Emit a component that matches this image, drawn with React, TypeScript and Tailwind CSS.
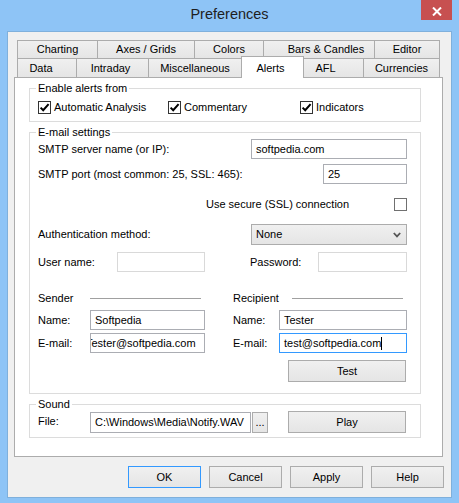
import React from "react";

function Check({ checked }: { checked?: boolean }) {
  return (
    <span className={`w-[13px] h-[13px] border ${checked ? "border-[#333333]" : "border-[#707070]"} bg-white flex items-center justify-center shrink-0`}>
      {checked && (
        <svg width="11" height="11" viewBox="0 0 11 11">
          <path d="M1.6 5.6 L4.2 8.2 L9.6 2.2" fill="none" stroke="#000" strokeWidth="2" />
        </svg>
      )}
    </span>
  );
}

function Btn({ children, className = "" }: { children: React.ReactNode; className?: string }) {
  return (
    <div className={`h-[22px] border bg-linear-to-b from-[#f0f0f0] to-[#e5e5e5] flex items-center justify-center shrink-0 ${className}`}>
      {children}
    </div>
  );
}

function Field({ children, className = "" }: { children?: React.ReactNode; className?: string }) {
  return (
    <div className={`h-[20px] border bg-white flex items-center overflow-hidden whitespace-nowrap shrink-0 ${className}`}>
      {children}
    </div>
  );
}

function Group({ title, className = "", children }: { title: string; className?: string; children: React.ReactNode }) {
  return (
    <div className={`relative ml-[14px] w-[392px] border border-[#dcdcdc] ${className}`}>
      <span className="absolute left-[6px] top-[-8px] bg-white px-[2px] leading-[14px]">{title}</span>
      {children}
    </div>
  );
}

const tabBase = "h-full border-l border-t border-[#acacac] bg-linear-to-b from-[#f0f0f0] to-[#e5e5e5] flex items-center justify-center shrink-0";

export default function App() {
  return (
    <div className="w-[459px] h-[503px] bg-[#8ec4f6] font-['Liberation_Sans',Arial,sans-serif] text-[11px] text-black flex flex-col overflow-hidden">
      {/* Title bar */}
      <div className="h-[31px] relative flex items-center justify-center shrink-0">
        <span className="text-[14.5px] text-[#1e1e1e] mt-[-1px]">Preferences</span>
        <div className="absolute top-0 right-[7px] w-[31px] h-[20px] bg-[#c75050] flex items-center justify-center">
          <svg width="10" height="9" viewBox="0 0 10 9" className="mt-[2px]">
            <path d="M1 0.5 L9 8.5 M9 0.5 L1 8.5" stroke="#ffffff" strokeWidth="2" />
          </svg>
        </div>
      </div>

      {/* Client area */}
      <div className="mx-[7px] h-[467px] border border-[#7fb0dc] bg-[#f0f0f0] flex flex-col shrink-0">
        {/* Tabs */}
        <div className="pt-[8px] pl-[9px] flex flex-col">
          <div className="h-[18px] flex">
            <div className={`${tabBase} w-[80px]`}>Charting</div>
            <div className={`${tabBase} w-[97px]`}>Axes / Grids</div>
            <div className={`${tabBase} w-[69px]`}>Colors</div>
            <div className={`${tabBase} w-[111px] pl-[14px]`}>Bars &amp; Candles</div>
            <div className={`${tabBase} w-[66px] border-r`}>Editor</div>
          </div>
          <div className="h-[19px] flex items-start">
            <div className={`${tabBase} w-[59px] pr-[12px]`}>Data</div>
            <div className={`${tabBase} w-[72px] pr-[4px]`}>Intraday</div>
            <div className={`${tabBase} w-[93px]`}>Miscellaneous</div>
            <div className="relative z-10 -mt-[2px] h-[22px] w-[63px] border-l border-t border-r border-[#acacac] bg-white flex items-start justify-center pt-[3px] pr-[4px] shrink-0">
              Alerts
            </div>
            <div className={`${tabBase} w-[59px] pr-[16px] border-l-0`}>AFL</div>
            <div className={`${tabBase} w-[77px] border-r`}>Currencies</div>
          </div>
        </div>

        {/* Panel */}
        <div className="ml-[6px] w-[429px] h-[380px] border border-[#acacac] bg-white flex flex-col shrink-0">
          <Group title="Enable alerts from" className="mt-[10px] h-[34px]">
            <div className="pt-[12px] pl-[8px] h-[25px] flex items-center">
              <div className="w-[130px] flex items-center gap-[3px]"><Check checked /><span>Automatic Analysis</span></div>
              <div className="w-[132px] flex items-center gap-[3px]"><Check checked /><span>Commentary</span></div>
              <div className="flex items-center gap-[3px]"><Check checked /><span>Indicators</span></div>
            </div>
          </Group>

          <Group title="E-mail settings" className="mt-[10px] h-[262px]">
            <div className="flex flex-col pl-[8px] pr-[13px]">
              <div className="mt-[6px] h-[20px] flex items-center justify-between">
                <span>SMTP server name (or IP):</span>
                <Field className="w-[156px] border-[#abadb3] px-[4px]">softpedia.com</Field>
              </div>
              <div className="mt-[5px] h-[20px] flex items-center justify-between">
                <span>SMTP port (most common: 25, SSL: 465):</span>
                <Field className="w-[84px] border-[#abadb3] px-[4px]">25</Field>
              </div>
              <div className="mt-[10px] h-[21px] flex items-center">
                <span className="ml-[168px]">Use secure (SSL) connection</span>
                <span className="ml-auto"><Check /></span>
              </div>
              <div className="mt-[9px] h-[21px] flex items-center justify-between">
                <span>Authentication method:</span>
                <div className="w-[156px] h-[21px] border border-[#acacac] bg-linear-to-b from-[#f0f0f0] to-[#e5e5e5] flex items-center pl-[4px] pr-[4px]">
                  <span>None</span>
                  <svg width="8" height="6" viewBox="0 0 8 6" className="ml-auto mr-[1px]">
                    <path d="M0.8 1 L4 4.4 L7.2 1" fill="none" stroke="#555555" strokeWidth="1.8" />
                  </svg>
                </div>
              </div>
              <div className="mt-[7px] h-[20px] flex items-center">
                <span className="w-[79px] shrink-0">User name:</span>
                <Field className="w-[88px] border-[#d9d9d9]" />
                <span className="ml-[45px] w-[68px] shrink-0">Password:</span>
                <Field className="w-[89px] border-[#d9d9d9]" />
              </div>
              <div className="mt-[18px] h-[16px] flex items-center">
                <span className="w-[52px] shrink-0">Sender</span>
                <div className="w-[111px] h-px bg-[#a0a0a0] shrink-0" />
                <span className="ml-[32px] w-[59px] shrink-0">Recipient</span>
                <div className="w-[111px] h-px bg-[#a0a0a0] shrink-0" />
              </div>
              <div className="mt-[4px] h-[20px] flex items-center">
                <span className="w-[52px] shrink-0">Name:</span>
                <Field className="w-[115px] border-[#abadb3] px-[4px]">Softpedia</Field>
                <span className="ml-[28px] w-[46px] shrink-0">Name:</span>
                <Field className="w-[128px] border-[#abadb3] px-[4px]">Tester</Field>
              </div>
              <div className="mt-[3px] h-[20px] flex items-center">
                <span className="w-[52px] shrink-0">E-mail:</span>
                <Field className="w-[115px] border-[#abadb3]">
                  <span className="-ml-[5px] shrink-0">Tester@softpedia.com</span>
                </Field>
                <span className="ml-[28px] w-[46px] shrink-0">E-mail:</span>
                <Field className="w-[128px] border-[#3399ff] px-[4px]">
                  <span>test@softpedia.com</span>
                  <span className="w-px h-[13px] bg-black" />
                </Field>
              </div>
              <div className="mt-[7px] h-[22px] flex items-center">
                <Btn className="ml-[250px] w-[118px] border-[#acacac]">Test</Btn>
              </div>
            </div>
          </Group>

          <Group title="Sound" className="mt-[10px] h-[34px]">
            <div className="mt-[6px] pl-[8px] h-[22px] flex items-center">
              <span className="w-[52px] shrink-0 -mt-[1px]">File:</span>
              <Field className="w-[161px] h-[21px] border-[#abadb3] px-[4px]">C:\Windows\Media\Notify.WAV</Field>
              <div className="ml-[1px] w-[16px] h-[21px] border border-[#acacac] bg-linear-to-b from-[#f0f0f0] to-[#e5e5e5] flex items-end justify-center pb-[4px] shrink-0 leading-none">...</div>
              <Btn className="ml-[20px] w-[118px] border-[#acacac]">Play</Btn>
            </div>
          </Group>
        </div>

        {/* Bottom buttons */}
        <div className="mt-[9px] pr-[7px] flex justify-end gap-[8px]">
          <Btn className="w-[73px] border-[#3399ff]">OK</Btn>
          <Btn className="w-[73px] border-[#acacac]">Cancel</Btn>
          <Btn className="w-[73px] border-[#acacac]">Apply</Btn>
          <Btn className="w-[73px] border-[#acacac]">Help</Btn>
        </div>
      </div>
    </div>
  );
}
